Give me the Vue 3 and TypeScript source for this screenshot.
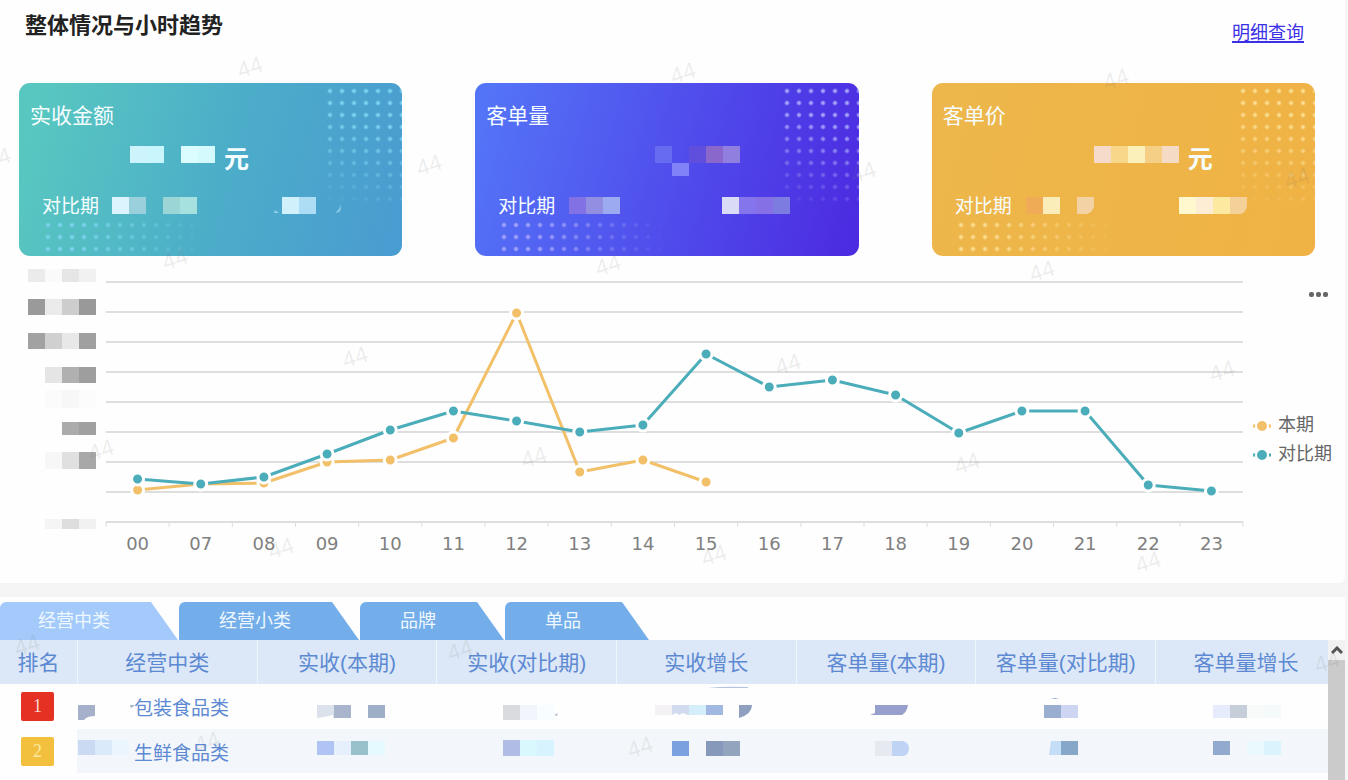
<script setup lang="ts">
import { h, ref } from 'vue'

type Cell = string | null
interface Block { x: number; y: number; height: number; cells: Cell[] }
interface Scrap { d: string; fill: string }

const CELL = 17

// Masked value: a strip of flat colour cells, with optional irregular scraps on top
function Mosaic(props: { blocks: Block[]; scraps?: Scrap[]; width: number; height: number }) {
  return h('svg', { width: props.width, height: props.height, 'aria-hidden': 'true' }, [
    ...props.blocks.flatMap((b) =>
      b.cells.flatMap((fill, i) =>
        fill ? [h('rect', { x: b.x + i * CELL, y: b.y, width: CELL, height: b.height, fill })] : [],
      ),
    ),
    ...(props.scraps ?? []).map((s) => h('path', s)),
  ])
}
Mosaic.props = ['blocks', 'scraps', 'width', 'height']

const _ = null

const cards = [
  {
    theme: 'teal', title: '实收金额', unit: '元', width: 85,
    main: [
      { x: 0, y: 4, height: 17, cells: ['#cdf3fd', '#c9f5fd', _, '#dcfdff', '#d4fafe'] },
    ],
    compare: [{ x: 0, y: 0, height: 17, cells: ['#dcf4fd', '#9ad0dc', _, '#9cd5d6', '#a6e0df', _, _, _, _, _, '#d0f0fb', '#addcf5'] }],
    scraps: [{ d: 'M227 15Q230 12 228 7Q229 12 223 16Z', fill: '#8fd0ea' }, { d: 'M163 13L167 16H162Z', fill: '#8fd0ea' }],
  },
  {
    theme: 'violet', title: '客单量', unit: '', width: 160,
    main: [
      { x: 69, y: 4, height: 17, cells: ['#666cf0', _, '#5f4fdc', '#8967cb', '#917fe0'] },
      { x: 69, y: 21, height: 13, cells: [_, '#8082f6'] },
    ],
    compare: [{ x: 1, y: 0, height: 17, cells: ['#8271e4', '#938fe0', '#9caaf2', _, _, _, _, _, _, '#d9dbf7', '#8575ec', '#8570e6', '#7c7bdf'] }],
    scraps: [],
  },
  {
    theme: 'amber', title: '客单价', unit: '元', width: 136,
    main: [{ x: 51, y: 4, height: 17, cells: ['#f6dbcb', '#f8d68a', '#fbefba', '#f6cf86', '#f5dac5'] }],
    compare: [{ x: 1, y: 0, height: 17, cells: ['#efab55', '#fbedba', _, '#f3d3a5', _, _, _, _, _, '#fff7cd', '#fcedd4', '#fde9a0', '#f5d19a'] }],
    scraps: [{ d: 'M69 9Q68 15 62 17H69Z', fill: '#efb447' }, { d: 'M222 9Q221 15 216 17H222Z', fill: '#f0b344' }],
  },
]

const hours = ['00', '07', '08', '09', '10', '11', '12', '13', '14', '15', '16', '17', '18', '19', '20', '21', '22', '23']
const plot = { left: 106, right: 1243, top: 22, step: 30, lines: 9 }
const bottom = plot.top + plot.step * (plot.lines - 1)
const band = (plot.right - plot.left) / hours.length
const px = (i: number) => plot.left + band * (i + 0.5)

const series = [
  { name: '本期', color: '#f1c068', ys: [230, 224, 223, 202, 200, 178, 53, 212, 200, 222] },
  { name: '对比期', color: '#4badb9', ys: [219, 224, 217, 194, 170, 151, 161, 172, 165, 94, 127, 120, 135, 173, 151, 151, 225, 231] },
]
const line = (ys: number[]) => ys.map((y, i) => `${px(i)},${y}`).join(' ')

const axisBlocks: Block[] = [
  { x: 28, y: 9, height: 13, cells: ['#ebebeb', '#fafafa', '#e6e6e6', '#f1f1f1'] },
  { x: 28, y: 39, height: 16, cells: ['#9a9a9a', '#ebebeb', '#cdcdcd', '#999999'] },
  { x: 28, y: 73, height: 16, cells: ['#a2a2a2', '#d0d0d0', '#e8e8e8', '#a0a0a0'] },
  { x: 28, y: 107, height: 16, cells: [_, '#e5e5e5', '#b0b0b0', '#9e9e9e'] },
  { x: 28, y: 130, height: 18, cells: [_, '#fbfbfb', '#f7f7f7', '#fcfcfc'] },
  { x: 28, y: 162, height: 13, cells: [_, _, '#ababab', '#a0a0a0'] },
  { x: 28, y: 192, height: 17, cells: [_, '#f7f7f7', '#e0e0e0', '#a8a8a8'] },
  { x: 28, y: 259, height: 10, cells: [_, '#f5f5f5', '#dedede', '#f1f1f1'] },
]

const tabs = ['经营中类', '经营小类', '品牌', '单品']
const active = ref(0)

const columns = ['排名', '经营中类', '实收(本期)', '实收(对比期)', '实收增长', '客单量(本期)', '客单量(对比期)', '客单量增长']
const rows = [
  {
    name: '包装食品类',
    mask: [{ x: 1, y: 21, height: 15, cells: ['#a5b1cb'] }],
    maskScraps: [{ d: 'M18 32Q10 32 7 36H18Z', fill: '#fefefe' }, { d: 'M53 21H57V22L54 24Z', fill: '#a5b1cb' }],
    values: [
      { blocks: [{ x: 60, y: 21, height: 13, cells: ['#dce2eb', '#a9b5cd', _, '#9fafc8'] }], scraps: [{ d: 'M60 34Q69 33 76 31V34Z', fill: '#fefefe' }] },
      { blocks: [{ x: 67, y: 21, height: 15, cells: ['#dadbde', '#f2f5fb', '#f8fdff'] }], scraps: [{ d: 'M118 31L122 29L121 32Z', fill: '#b5c0d6' }] },
      {
        blocks: [{ x: 39, y: 21, height: 10, cells: ['#f4f1f5', '#d2dbee', '#d5effa', '#a0b8e2'] }],
        scraps: [
          { d: 'M92 4Q108 2 132 3V4Z', fill: '#b6c3df' },
          { d: 'M123 21H136Q136 30 123 34Z', fill: '#8f9fc0' },
          { d: 'M56 31L60 29L63 31L67 29L72 31Z', fill: '#fefefe' },
        ],
      },
      {
        blocks: [],
        scraps: [{ d: 'M79 21H112Q111 28 106 31H74L79 29Z', fill: '#979fcc' }],
      },
      { blocks: [{ x: 69, y: 21, height: 13, cells: ['#9aaed2', '#cdd5f3'] }], scraps: [{ d: 'M76 15L80 14L84 15Z', fill: '#8ba6d3' }] },
      { blocks: [{ x: 58, y: 21, height: 13, cells: ['#e6ecfc', '#c5ced9', '#f8fafa', '#f4f9fa'] }], scraps: [] },
    ],
  },
  {
    name: '生鲜食品类',
    mask: [{ x: 1, y: 11, height: 15, cells: ['#cbdaf3', '#daeafb', '#eaf5fd'] }],
    maskScraps: [],
    values: [
      { blocks: [{ x: 60, y: 12, height: 14, cells: ['#afc4f4', '#e6f0fc', '#99c1cb', '#e4fafe'] }], scraps: [] },
      { blocks: [{ x: 67, y: 11, height: 16, cells: ['#b1bce5', '#d9f8fd', '#d6f3ff'] }], scraps: [] },
      { blocks: [{ x: 56, y: 12, height: 15, cells: ['#7ba2df', _, '#8799ba', '#93a4bf'] }], scraps: [] },
      { blocks: [{ x: 79, y: 12, height: 15, cells: ['#e6eaf0'] }], scraps: [{ d: 'M96 12H107Q113 14 113 19Q113 26 107 27H96Z', fill: '#bfd4f5' }] },
      { blocks: [{ x: 69, y: 12, height: 14, cells: ['#c5def7', '#86a7c8'] }], scraps: [{ d: 'M69 12H76L74 26H69Z', fill: '#f3f7fb' }] },
      { blocks: [{ x: 58, y: 12, height: 14, cells: ['#92aacd', _, '#eaf9fe', '#d9f4fd'] }], scraps: [] },
    ],
  },
]

const marks = [
  [250, 67], [683, 73], [1116, 79], [-2, 158], [429, 165], [863, 172], [1297, 178],
  [175, 259], [608, 265], [1042, 271], [355, 357], [788, 364], [1222, 371],
  [101, 450], [534, 457], [967, 463], [281, 548], [714, 555], [1148, 562],
  [27, 645], [460, 650], [1327, 662], [207, 742], [640, 747],
]
</script>

<template>
  <div class="page">
    <section class="panel overview">
      <header class="head">
        <h1>整体情况与小时趋势</h1>
        <a href="#detail">明细查询</a>
      </header>

      <div class="cards">
        <article v-for="c in cards" :key="c.title" class="card" :class="c.theme">
          <h2>{{ c.title }}</h2>
          <div class="main">
            <Mosaic :blocks="c.main" :width="c.width" :height="34" />
            <strong>{{ c.unit }}</strong>
          </div>
          <div class="compare">
            <span>对比期</span>
            <Mosaic :blocks="c.compare" :scraps="c.scraps" :width="230" :height="17" />
          </div>
        </article>
      </div>

      <div class="chart">
        <svg class="plot" viewBox="0 0 1249 315" role="img" aria-label="小时趋势">
          <template v-for="(b, r) in axisBlocks" :key="'b' + r">
            <template v-for="(fill, i) in b.cells" :key="i">
              <rect v-if="fill" :x="b.x + i * 17" :y="b.y" width="17" :height="b.height" :fill="fill" />
            </template>
          </template>
          <g stroke="#dedede" stroke-width="2">
            <line
              v-for="n in plot.lines" :key="n" :x1="plot.left" :x2="plot.right"
              :y1="plot.top + plot.step * (n - 1)" :y2="plot.top + plot.step * (n - 1)"
            />
            <line
              v-for="n in hours.length + 1" :key="'t' + n" stroke-width="1"
              :x1="plot.left + band * (n - 1)" :x2="plot.left + band * (n - 1)" :y1="bottom" :y2="bottom + 5"
            />
          </g>
          <g v-for="s in series" :key="s.name">
            <polyline :points="line(s.ys)" fill="none" :stroke="s.color" stroke-width="3" stroke-linejoin="round" />
            <circle v-for="(y, i) in s.ys" :key="i" :cx="px(i)" :cy="y" r="6" :fill="s.color" stroke="#fff" stroke-width="3" />
          </g>
          <text v-for="(t, i) in hours" :key="t" class="tick" :x="px(i)" y="290">{{ t }}</text>
        </svg>
        <aside class="side">
          <button class="more" type="button" aria-label="更多">
            <svg width="20" height="6"><rect x="0" y="1" width="5" height="5" rx="2" /><rect x="7" y="1" width="5" height="5" rx="2" /><rect x="14" y="1" width="5" height="5" rx="2" /></svg>
          </button>
          <ul class="legend">
            <li v-for="s in series" :key="s.name">
              <svg width="20" height="12">
                <path d="M1 6H19" :stroke="s.color" stroke-width="3" />
                <circle cx="10" cy="6" r="6" :fill="s.color" stroke="#fff" stroke-width="2" />
              </svg>
              {{ s.name }}
            </li>
          </ul>
        </aside>
      </div>
    </section>

    <section class="panel ranking">
      <nav class="tabs" role="tablist">
        <button
          v-for="(t, i) in tabs" :key="t" type="button" role="tab"
          :aria-selected="active === i" :class="{ on: active === i }" @click="active = i"
        >{{ t }}</button>
      </nav>
      <div class="body">
        <table>
          <thead>
            <tr><th v-for="c in columns" :key="c" scope="col">{{ c }}</th></tr>
          </thead>
          <tbody>
            <tr v-for="(r, i) in rows" :key="r.name">
              <td class="rank"><span :class="'rank-' + (i + 1)">{{ i + 1 }}</span></td>
              <td>
                <div class="name"><Mosaic :blocks="r.mask" :scraps="r.maskScraps" :width="57" :height="44" />{{ r.name }}</div>
              </td>
              <td v-for="(v, j) in r.values" :key="j"><Mosaic :blocks="v.blocks" :scraps="v.scraps" :width="160" :height="44" /></td>
            </tr>
          </tbody>
        </table>
        <div class="scroll" aria-hidden="true">
          <div class="up"><svg width="12" height="8"><path d="M1 7L6 2L11 7" fill="none" stroke="#555" stroke-width="3" /></svg></div>
          <div class="thumb"></div>
        </div>
      </div>
    </section>

    <svg class="marks" aria-hidden="true">
      <text v-for="([x, y], i) in marks" :key="i" :x="x" :y="y + 8" :transform="`rotate(-18 ${x} ${y})`">44</text>
    </svg>
  </div>
</template>

<style>
body { margin: 0; background: #f5f5f5; }
</style>

<style scoped>
.page {
  position: relative;
  display: flex;
  flex-direction: column;
  gap: 14px;
  height: 100vh;
  overflow: hidden;
  padding-right: 3px;
  box-sizing: border-box;
  font-family: "Liberation Sans", "Noto Sans CJK SC", sans-serif;
}
.panel { background: #fefefe; }
.overview { padding-bottom: 8px; border-radius: 0 0 6px 0; flex: none; }
.head {
  display: flex;
  justify-content: space-between;
  height: 83px;
  padding: 0 41px 0 25px;
}
h1 { margin: 10px 0 0; font-size: 22px; line-height: 32px; color: #222; }
.head a { margin-top: 18px; height: 30px; font-size: 18px; line-height: 30px; color: #3a30e6; text-underline-offset: 2px; text-decoration-thickness: 2px; }

.cards { display: grid; grid-template-columns: repeat(3, 1fr); gap: 73px; padding: 0 30px 0 19px; }
.card {
  position: relative;
  height: 173px;
  border-radius: 11px;
  overflow: hidden;
  color: #f6fdff;
  box-sizing: border-box;
  padding-top: 18px;
}
.card::before, .card::after {
  content: "";
  position: absolute;
  background: radial-gradient(circle, var(--dot) 1px, transparent 3px) 0 0 / 12px 12px;
}
.card::before { top: 2px; right: 0; width: 78px; height: 122px; mask-image: linear-gradient(195deg, #000 30%, transparent 100%); }
.card::after { left: 23px; top: 136px; width: 168px; height: 36px; mask-image: linear-gradient(90deg, #000 20%, transparent 100%); }
.teal { background: linear-gradient(105deg, #58c7c0 5%, #4cacc9 55%, #4a9dd0 95%); --dot: #7cd3f0; }
.violet { background: linear-gradient(105deg, #5474f7 3%, #4f47ea 60%, #4c2be1 98%); --dot: #a4a2fa; }
.amber { background: linear-gradient(105deg, #edb74b, #f0b244); --dot: #fbdc90; }
h2 { margin: 0; padding-left: 11px; font-size: 21px; line-height: 30px; font-weight: 400; }
.main { display: flex; gap: 9px; height: 34px; margin-top: 11px; padding-left: 111px; }
.main strong { font-size: 25px; line-height: 34px; }
.compare { display: flex; align-items: center; gap: 13px; height: 30px; margin-top: 14px; padding-left: 23px; font-size: 19px; line-height: 30px; }
.compare span { padding-top: 3px; }

.chart { display: flex; align-items: flex-start; margin-top: 4px; }
.plot { flex: 1; min-width: 0; display: block; }
.tick { font: 18px "DejaVu Sans", sans-serif; fill: #808080; text-anchor: middle; }
.side { width: 96px; flex: none; }
.more { display: flex; align-items: center; justify-content: flex-end; width: 80px; height: 20px; margin-top: 24px; padding: 0; border: 0; background: none; fill: #666; }
.legend { list-style: none; margin: 107px 0 0; padding: 0 0 0 3px; font-size: 18px; line-height: 29px; color: #666; }
.legend li { display: flex; align-items: center; gap: 6px; white-space: nowrap; }
.legend svg { flex: none; }

.ranking { flex: 1; min-height: 0; display: flex; flex-direction: column; padding-top: 5px; }
.tabs { display: flex; gap: 1px; height: 38px; flex: none; }
.tabs button {
  border: 0;
  padding: 0 68px 0 40px;
  font: inherit;
  font-size: 18px;
  line-height: 38px;
  color: #eff8ff;
  background: #74aeea;
  border-radius: 6px 0 0 0;
  clip-path: polygon(0 0, calc(100% - 27px) 0, 100% 100%, 0 100%);
}
.tabs button:first-child { padding-left: 38px; }
.tabs .on { background: #a3cafb; }
.body { display: flex; flex: 1; min-height: 0; }
table { flex: 1; align-self: flex-start; border-collapse: separate; border-spacing: 0; table-layout: fixed; width: 100%; color: #5d89d3; }
th { height: 44px; padding: 2px 0 0; box-sizing: border-box; background: #dce8f7; font-size: 21px; line-height: 30px; font-weight: 400; border-left: 1px solid #eef5fd; white-space: nowrap; }
th:first-child { width: 77px; border-left: 0; }
th:last-child { width: 173px; padding-left: 8px; }
td { height: 44px; padding: 0; }
tbody tr:first-child td { padding-bottom: 1px; }
td > svg, .name svg { display: block; flex: none; }
tbody tr:nth-child(even) td:not(.rank) { background: #f3f7fb; }
.name { display: flex; align-items: center; height: 44px; font-size: 19px; white-space: nowrap; }
.rank { text-align: center; }
.rank span { display: block; width: 33px; height: 29px; margin-left: 21px; border-radius: 2px; font-size: 18px; line-height: 29px; font-family: "Liberation Serif", serif; }
.rank-1 { background: #e43124; color: #fbd8cf; }
.rank-2 { background: #f3c03e; color: #fdeaa3; }
.scroll { width: 17px; flex: none; display: flex; flex-direction: column; }
.up { height: 20px; display: flex; align-items: center; justify-content: center; background: #f1f1f1; }
.thumb { flex: 1; background: #cbcbcb; }
.marks { position: absolute; inset: 0; width: 100%; height: 100%; pointer-events: none; }
.marks text { font: 23px "Liberation Sans", sans-serif; text-anchor: middle; fill: #707070; fill-opacity: 0.12; }
</style>
